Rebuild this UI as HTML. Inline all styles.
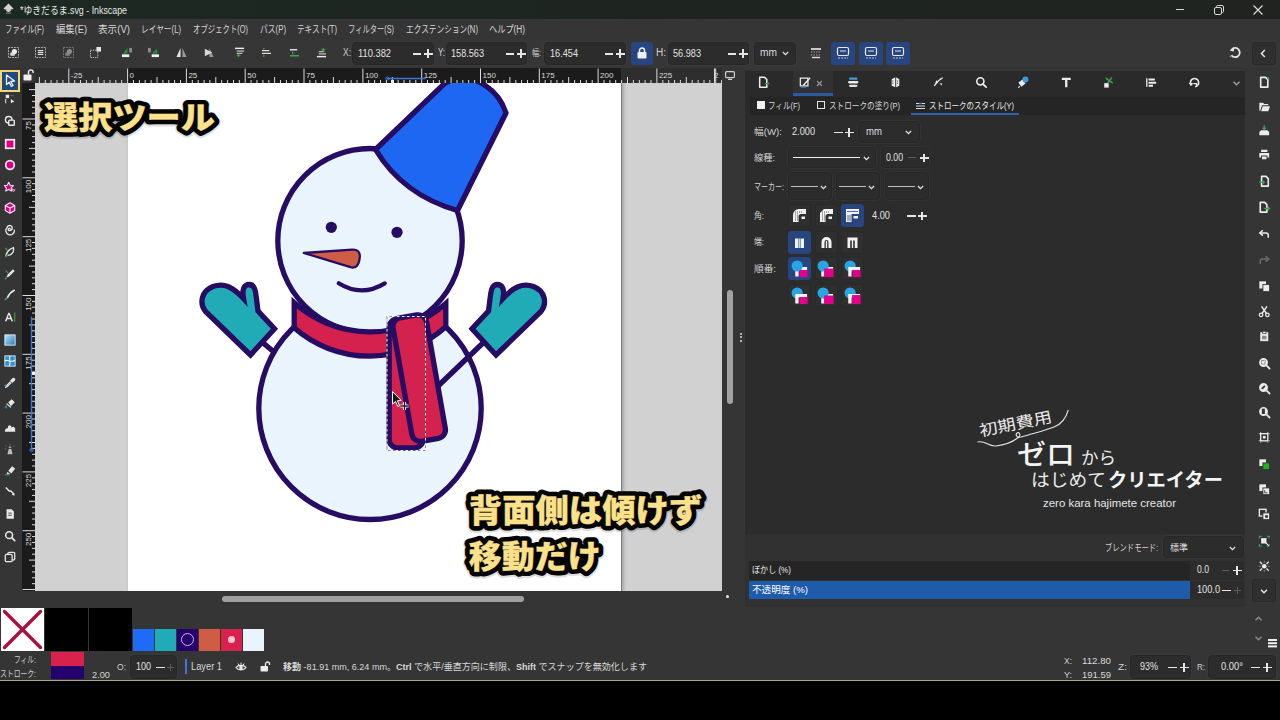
<!DOCTYPE html>
<html lang="ja"><head><meta charset="utf-8"><title>ゆきだるま.svg - Inkscape</title>
<style>

*{box-sizing:border-box;margin:0;padding:0}
html,body{width:1280px;height:720px;overflow:hidden;background:#353535}
body{position:relative;font-family:"Liberation Sans","Noto Sans CJK JP",sans-serif;font-size:10px;color:#dcdcdc}
.a{position:absolute}
.t{position:absolute;white-space:nowrap;transform-origin:0 50%;display:block}
.fld{position:absolute;background:#2c2c2c;border:1px solid #272727;border-radius:4px;box-shadow:0 0 0 1px rgba(70,70,70,.25)}
.btn{position:absolute;background:#2f2f2f;border:1px solid #292929;border-radius:3px}
.sel{background:#27467f;border-color:#27467f}
svg{position:absolute;overflow:visible}
.pm{position:absolute;background:#e6e6e6}
.pmd{position:absolute;background:#5a5a5a}

</style></head>
<body>
<div class="a" style="left:0;top:0;width:1280px;height:19px;background:linear-gradient(90deg,#1c2922 0%,#1e2521 50%,#20231f 100%)"></div>
<svg style="left:3px;top:3px" width="11" height="11" viewBox="0 0 11 11"><path d="M5.5 0.5 L10.5 5.6 Q9 7 7.6 6.2 Q8.6 7.8 7 8.6 Q5.5 9.4 4 8.6 Q2.4 7.8 3.4 6.2 Q2 7 0.5 5.6 Z" fill="#cfd4d1"/><path d="M3 9.6 h5 v0.9 h-5z" fill="#9aa09c"/></svg>
<span class="t" style="left:20.0px;top:2.7px;font-size:10.5px;line-height:14.7px;color:#e8e8e8;font-weight:400;transform:scaleX(0.841);">*ゆきだるま.svg - Inkscape</span>
<div class="a" style="left:1176px;top:9px;width:8px;height:1px;background:#d8d8d8"></div>
<svg style="left:1214px;top:5px" width="10" height="10" viewBox="0 0 10 10"><rect x="0.5" y="2.5" width="7" height="7" rx="1.5" fill="none" stroke="#d8d8d8" stroke-width="1"/><path d="M2.5 2 V1.7 Q2.5 0.5 3.7 0.5 H8 Q9.5 0.5 9.5 2 V6.3 Q9.5 7.5 8.3 7.5" fill="none" stroke="#d8d8d8" stroke-width="1"/></svg>
<svg style="left:1253px;top:5px" width="10" height="10" viewBox="0 0 10 10"><path d="M0.5 0.5 L9.5 9.5 M9.5 0.5 L0.5 9.5" stroke="#e0e0e0" stroke-width="1.1" fill="none"/></svg>
<div class="a" style="left:0;top:19px;width:1280px;height:20px;background:#353535"></div>
<span class="t" style="left:5.0px;top:22.5px;font-size:10px;line-height:14.0px;color:#d6d6d6;font-weight:400;transform:scaleX(0.739);">ファイル(F)</span>
<span class="t" style="left:56.0px;top:22.5px;font-size:10px;line-height:14.0px;color:#d6d6d6;font-weight:400;transform:scaleX(0.930);">編集(E)</span>
<span class="t" style="left:98.0px;top:22.5px;font-size:10px;line-height:14.0px;color:#d6d6d6;font-weight:400;transform:scaleX(0.960);">表示(V)</span>
<span class="t" style="left:141.0px;top:22.5px;font-size:10px;line-height:14.0px;color:#d6d6d6;font-weight:400;transform:scaleX(0.770);">レイヤー(L)</span>
<span class="t" style="left:193.0px;top:22.5px;font-size:10px;line-height:14.0px;color:#d6d6d6;font-weight:400;transform:scaleX(0.739);">オブジェクト(O)</span>
<span class="t" style="left:260.0px;top:22.5px;font-size:10px;line-height:14.0px;color:#d6d6d6;font-weight:400;transform:scaleX(0.780);">パス(P)</span>
<span class="t" style="left:297.0px;top:22.5px;font-size:10px;line-height:14.0px;color:#d6d6d6;font-weight:400;transform:scaleX(0.762);">テキスト(T)</span>
<span class="t" style="left:348.0px;top:22.5px;font-size:10px;line-height:14.0px;color:#d6d6d6;font-weight:400;transform:scaleX(0.729);">フィルター(S)</span>
<span class="t" style="left:406.0px;top:22.5px;font-size:10px;line-height:14.0px;color:#d6d6d6;font-weight:400;transform:scaleX(0.769);">エクステンション(N)</span>
<span class="t" style="left:489.0px;top:22.5px;font-size:10px;line-height:14.0px;color:#d6d6d6;font-weight:400;transform:scaleX(0.820);">ヘルプ(H)</span>
<div class="a" style="left:0;top:39px;width:1280px;height:29px;background:#363636"></div>
<svg style="left:8px;top:47px" width="11" height="11" viewBox="0 0 12 12"><rect x="0.5" y="0.5" width="11" height="11" fill="none" stroke="#bdbdbd" stroke-dasharray="2 1"/><circle cx="7" cy="5" r="2.8" fill="#f0f0f0"/><rect x="2.5" y="6" width="5" height="3.5" fill="#e0e0e0"/></svg>
<svg style="left:35px;top:47px" width="11" height="11" viewBox="0 0 12 12"><rect x="0.5" y="0.5" width="11" height="11" fill="none" stroke="#bdbdbd" stroke-dasharray="2 1"/><path d="M3 4h6M3 6h6M3 8h6" stroke="#e0e0e0" stroke-width="1.2"/></svg>
<svg style="left:63px;top:47px" width="11" height="11" viewBox="0 0 12 12"><rect x="0.5" y="0.5" width="11" height="11" fill="none" stroke="#7c7c7c" stroke-dasharray="2 1"/><circle cx="7" cy="5" r="2.8" fill="#8e8e8e"/><rect x="2.5" y="6" width="5" height="3.5" fill="#858585"/></svg>
<svg style="left:90px;top:47px" width="11" height="11" viewBox="0 0 12 12"><rect x="0.5" y="3.5" width="8" height="8" fill="none" stroke="#c8c8c8" stroke-dasharray="1.5 1"/><rect x="7" y="0" width="5" height="5" fill="#e8e8e8"/></svg>
<svg style="left:121px;top:47px" width="11" height="11" viewBox="0 0 12 12"><rect x="1" y="8" width="8" height="3" fill="#f0f0f0"/><path d="M2 7 L7 1 V7Z" fill="#2c8c3c"/><rect x="9" y="1" width="3" height="5" fill="#8c8c8c"/></svg>
<svg style="left:148px;top:47px" width="11" height="11" viewBox="0 0 12 12"><rect x="4" y="8" width="8" height="3" fill="#f0f0f0"/><path d="M4 7 H10 V2Z" fill="#2c8c3c"/><rect x="0" y="1" width="3" height="5" fill="#8c8c8c"/></svg>
<svg style="left:176px;top:47px" width="11" height="11" viewBox="0 0 12 12"><path d="M5 1 V11 H0.5Z" fill="#e8e8e8"/><path d="M7 1 V11 H11.5Z" fill="#9a9a9a"/></svg>
<svg style="left:203px;top:47px" width="11" height="11" viewBox="0 0 12 12"><path d="M1 5 H11 V0.5Z" fill="#9a9a9a" transform="rotate(90 6 6)"/><path d="M2 2 L10 6 L2 10Z" fill="#d8d8d8"/></svg>
<svg style="left:234px;top:47px" width="11" height="11" viewBox="0 0 12 12"><path d="M1 1.5H11" stroke="#eaeaea" stroke-width="1.6"/><path d="M3 4.5H11M3 7H9" stroke="#bdbdbd" stroke-width="1.2"/><path d="M5 11V8l-2 2M5 8l2 2" stroke="#3aa04a" stroke-width="1.2" fill="none"/></svg>
<svg style="left:261px;top:47px" width="11" height="11" viewBox="0 0 12 12"><path d="M1 4H9M1 7H11" stroke="#d8d8d8" stroke-width="1.4"/><path d="M3 1V3M3 11V8.5" stroke="#3aa04a" stroke-width="1.3"/></svg>
<svg style="left:289px;top:47px" width="11" height="11" viewBox="0 0 12 12"><path d="M1 3H9" stroke="#eaeaea" stroke-width="1.5"/><path d="M1 9.5H11" stroke="#3aa04a" stroke-width="1.8"/><path d="M4 5V8" stroke="#3aa04a" stroke-width="1.3"/></svg>
<svg style="left:316px;top:47px" width="11" height="11" viewBox="0 0 12 12"><path d="M1 10.5H11" stroke="#eaeaea" stroke-width="1.6"/><path d="M3 7.5H11M3 5H9" stroke="#bdbdbd" stroke-width="1.2"/><path d="M8 1V4l-2-2M8 4l2-2" stroke="#3aa04a" stroke-width="1.2" fill="none"/></svg>
<span class="t" style="left:343.0px;top:46.0px;font-size:10px;line-height:14.0px;color:#d0d0d0;font-weight:400;transform:scaleX(0.846);">X:</span>
<div class="fld" style="left:352px;top:42px;width:82px;height:23px"></div><span class="t" style="left:358.0px;top:46.5px;font-size:10px;line-height:14.0px;color:#e2e2e2;font-weight:400;transform:scaleX(0.932);">110.382</span><div class="pm" style="left:412.5px;top:53.0px;width:8px;height:1.5px"></div><div class="pm" style="left:423.5px;top:53.0px;width:9px;height:1.5px"></div><div class="pm" style="left:427.2px;top:49.2px;width:1.5px;height:9px"></div>
<span class="t" style="left:438.0px;top:46.0px;font-size:10px;line-height:14.0px;color:#d0d0d0;font-weight:400;transform:scaleX(0.786);">Y:</span>
<div class="fld" style="left:446px;top:42px;width:81px;height:23px"></div><span class="t" style="left:451.0px;top:46.5px;font-size:10px;line-height:14.0px;color:#e2e2e2;font-weight:400;transform:scaleX(0.913);">158.563</span><div class="pm" style="left:505.5px;top:53.0px;width:8px;height:1.5px"></div><div class="pm" style="left:516.5px;top:53.0px;width:9px;height:1.5px"></div><div class="pm" style="left:520.2px;top:49.2px;width:1.5px;height:9px"></div>
<span class="t" style="left:532.0px;top:46.7px;font-size:9px;line-height:12.6px;color:#d0d0d0;font-weight:400;transform:scaleX(0.782);">幅:</span>
<div class="fld" style="left:544px;top:42px;width:82px;height:23px"></div><span class="t" style="left:550.0px;top:46.5px;font-size:10px;line-height:14.0px;color:#e2e2e2;font-weight:400;transform:scaleX(0.915);">16.454</span><div class="pm" style="left:604.5px;top:53.0px;width:8px;height:1.5px"></div><div class="pm" style="left:615.5px;top:53.0px;width:9px;height:1.5px"></div><div class="pm" style="left:619.2px;top:49.2px;width:1.5px;height:9px"></div>
<div class="a" style="left:630.5px;top:42px;width:22.5px;height:23px;background:#27467f;border-radius:3px"></div>
<svg style="left:637px;top:47px" width="10" height="12" viewBox="0 0 10 12"><rect x="0.5" y="5" width="9" height="6.5" rx="1" fill="#f0f0f0"/><path d="M2.5 5V3.5a2.5 2.5 0 0 1 5 0V5" fill="none" stroke="#f0f0f0" stroke-width="1.5"/></svg>
<span class="t" style="left:656.0px;top:46.0px;font-size:10px;line-height:14.0px;color:#d0d0d0;font-weight:400;transform:scaleX(1.000);">H:</span>
<div class="fld" style="left:668px;top:42px;width:81px;height:23px"></div><span class="t" style="left:673.0px;top:46.5px;font-size:10px;line-height:14.0px;color:#e2e2e2;font-weight:400;transform:scaleX(0.915);">56.983</span><div class="pm" style="left:727.5px;top:53.0px;width:8px;height:1.5px"></div><div class="pm" style="left:738.5px;top:53.0px;width:9px;height:1.5px"></div><div class="pm" style="left:742.2px;top:49.2px;width:1.5px;height:9px"></div>
<div class="fld" style="left:754px;top:42px;width:42px;height:23px"></div>
<span class="t" style="left:760.0px;top:46.0px;font-size:10px;line-height:14.0px;color:#d8d8d8;font-weight:400;transform:scaleX(1.020);">mm</span>
<svg style="left:781.5px;top:51.0px" width="7" height="5" viewBox="0 0 8 5"><path d="M1 0.8 L4 3.8 L7 0.8" fill="none" stroke="#e0e0e0" stroke-width="1.5"/></svg>
<svg style="left:810px;top:47px" width="12" height="12" viewBox="0 0 12 12"><path d="M1 2H11" stroke="#eee" stroke-width="1.6"/><path d="M1 5H11M1 8H11" stroke="#9a9a9a" stroke-width="1" stroke-dasharray="1.5 1"/><path d="M2 10.5H10" stroke="#ddd" stroke-width="1.4"/></svg>
<div class="a" style="left:831px;top:42px;width:24px;height:23px;background:#27467f;border-radius:3px"></div>
<svg style="left:837px;top:47px" width="12" height="12" viewBox="0 0 12 12"><rect x="0.5" y="0.5" width="11" height="8" rx="1.5" fill="none" stroke="#e8e8e8" stroke-width="1.2"/><path d="M3 4H9" stroke="#e8e8e8"/><path d="M1 11H11" stroke="#b8c4dc" stroke-width="1.2" stroke-dasharray="2 1"/></svg>
<div class="a" style="left:859px;top:42px;width:24px;height:23px;background:#27467f;border-radius:3px"></div>
<svg style="left:865px;top:47px" width="12" height="12" viewBox="0 0 12 12"><rect x="0.5" y="0.5" width="11" height="8" rx="1.5" fill="none" stroke="#e8e8e8" stroke-width="1.2"/><path d="M3 4H9" stroke="#e8e8e8"/><path d="M1 11H11" stroke="#b8c4dc" stroke-width="1.2" stroke-dasharray="2 1"/></svg>
<div class="a" style="left:886px;top:42px;width:24px;height:23px;background:#27467f;border-radius:3px"></div>
<svg style="left:892px;top:47px" width="12" height="12" viewBox="0 0 12 12"><rect x="0.5" y="0.5" width="11" height="8" rx="1.5" fill="none" stroke="#e8e8e8" stroke-width="1.2"/><path d="M3 4H9" stroke="#e8e8e8"/><path d="M1 11H11" stroke="#b8c4dc" stroke-width="1.2" stroke-dasharray="2 1"/></svg>
<svg style="left:1229px;top:46px" width="13" height="13" viewBox="0 0 13 13"><path d="M3 3.2 A4.6 4.6 0 1 1 2.4 9.2" fill="none" stroke="#e6e6e6" stroke-width="1.8"/><path d="M0.5 4.5 L4.8 1 L5 5.6Z" fill="#e6e6e6"/><circle cx="1.5" cy="10.5" r="1" fill="#4aa84a"/></svg>
<div class="btn" style="left:1252px;top:42px;width:24px;height:23px"></div>
<svg style="left:1260px;top:49px" width="6" height="9" viewBox="0 0 6 9"><path d="M4.8 1 L1.5 4.5 L4.8 8" fill="none" stroke="#e6e6e6" stroke-width="1.5"/></svg>
<div class="a" style="left:0;top:68px;width:21px;height:540px;background:#353535"></div>
<div class="a" style="left:0;top:70px;width:20px;height:22px;background:#1f4a80;border:2.5px solid #f7d774"></div>
<svg style="left:5px;top:74px" width="11" height="13" viewBox="0 0 11 13"><path d="M1.5 1 L9.5 7 L5.8 7.4 L8 11.5 L6.2 12.3 L4.2 8.2 L1.5 10.6Z" fill="#27467f" stroke="#f2f2f2" stroke-width="1.3" stroke-linejoin="round"/></svg>
<svg style="left:4px;top:93px" width="12" height="12" viewBox="0 0 14 14"><path d="M2 2h4v4h-4z" fill="#e8e8e8"/><path d="M2 7v5" stroke="#e8e8e8" stroke-width="1.2"/><path d="M8 7l4 3-4 2z" fill="#e8e8e8"/><path d="M8 3h3" stroke="#9a9a9a" stroke-dasharray="1 1"/></svg>
<svg style="left:4px;top:115px" width="12" height="12" viewBox="0 0 14 14"><circle cx="5.5" cy="5.5" r="3.8" fill="none" stroke="#e8e8e8" stroke-width="1.7"/><rect x="5.5" y="6" width="6.5" height="6" rx="1" fill="#353535" stroke="#e8e8e8" stroke-width="1.7"/></svg>
<svg style="left:4px;top:138px" width="12" height="12" viewBox="0 0 14 14"><rect x="2" y="2" width="10" height="10" fill="#d4008c" stroke="#f6e4f0" stroke-width="2"/></svg>
<svg style="left:4px;top:159px" width="12" height="12" viewBox="0 0 14 14"><circle cx="7" cy="7" r="5" fill="#d4008c" stroke="#f6e4f0" stroke-width="2"/></svg>
<svg style="left:4px;top:181px" width="12" height="12" viewBox="0 0 14 14"><path d="M5.5 1.5 L7.2 5 L11 5.4 L8.2 8 L9 11.8 L5.5 9.9 L2 11.8 L2.8 8 L0.5 5.4 L3.8 5Z" fill="#d4008c" stroke="#f4e6f0" stroke-width="1.2" stroke-linejoin="round"/><path d="M9 9l4 1.5-2 2z" fill="#d4008c" stroke="#f4e6f0" stroke-width="0.8"/></svg>
<svg style="left:4px;top:202px" width="12" height="12" viewBox="0 0 14 14"><path d="M7 1 L12.5 4 V10 L7 13 L1.5 10 V4Z" fill="#d4008c" stroke="#f4e6f0" stroke-width="1.3" stroke-linejoin="round"/><path d="M1.5 4 L7 7 L12.5 4 M7 7V13" fill="none" stroke="#f4e6f0" stroke-width="1.3"/></svg>
<svg style="left:4px;top:223px" width="12" height="12" viewBox="0 0 14 14"><path d="M7.5 7.2 a1.3 1.3 0 1 0 -1.6 1.6 a3 3 0 1 0 -2.2 -3.6 a5 5 0 1 0 8.4 3.2" fill="none" stroke="#e8e8e8" stroke-width="1.6" stroke-linecap="round"/></svg>
<svg style="left:4px;top:246px" width="12" height="12" viewBox="0 0 14 14"><path d="M2 12 C3 7 5 4 11 2 C12 7 9 11 4 11" fill="none" stroke="#e8e8e8" stroke-width="1.5"/><path d="M2 2l2 4" stroke="#3aa04a" stroke-width="1.5"/><circle cx="3" cy="11.5" r="1.3" fill="#3aa04a"/></svg>
<svg style="left:4px;top:268px" width="12" height="12" viewBox="0 0 14 14"><path d="M10.5 1.5 l2 2 -6.5 6.5 -3 1 1-3z" fill="#e8e8e8"/><path d="M1 13l2-2" stroke="#3aa04a" stroke-width="1.6"/><path d="M2 3l3 3" stroke="#3aa04a" stroke-width="1.4"/></svg>
<svg style="left:4px;top:289px" width="12" height="12" viewBox="0 0 14 14"><path d="M12 1.5 C9 3 6 6 4 10" fill="none" stroke="#e8e8e8" stroke-width="1.8" stroke-linecap="round"/><path d="M1 13 l3-3" stroke="#3aa04a" stroke-width="1.8"/></svg>
<svg style="left:4px;top:311px" width="12" height="12" viewBox="0 0 14 14"><path d="M1 12 L5 2 H6.6 L10.6 12 H8.6 L7.8 9.6 H3.8 L3 12Z M4.4 8 H7.2 L5.8 4Z" fill="#e8e8e8"/><path d="M12.5 1.5V12.5" stroke="#3aa04a" stroke-width="1.3"/></svg>
<svg style="left:4px;top:334px" width="12" height="12" viewBox="0 0 14 14"><defs><linearGradient id="gg" x1="0" y1="0" x2="1" y2="1"><stop offset="0" stop-color="#bfe2f6"/><stop offset="1" stop-color="#1a7fc0"/></linearGradient></defs><rect x="1" y="1" width="12" height="12" fill="url(#gg)" stroke="#e8f2f8" stroke-width="1"/></svg>
<svg style="left:4px;top:355px" width="12" height="12" viewBox="0 0 14 14"><rect x="1" y="1" width="12" height="12" fill="#2a8fd0" stroke="#e8f2f8" stroke-width="1"/><path d="M1 7 C4 4 6 10 13 6 M7 1 C5 5 9 8 6 13" fill="none" stroke="#eaf4fb" stroke-width="1.3"/></svg>
<svg style="left:4px;top:377px" width="12" height="12" viewBox="0 0 14 14"><path d="M12.5 1.5 a2 2 0 0 1 0 3 L9.5 7 7 4.5 9.5 1.8 a2 2 0 0 1 3-.3z" fill="#e8e8e8"/><path d="M7.5 5.5 L2.5 10.5 2 12 3.5 11.5 8.5 6.5" fill="none" stroke="#e8e8e8" stroke-width="1.3"/><path d="M1 9 l1.5 2" stroke="#2a8fd0" stroke-width="2"/></svg>
<svg style="left:4px;top:398px" width="12" height="12" viewBox="0 0 14 14"><path d="M5 5 L9 1.5 L12.5 5 L8 9.5Z" fill="#e8e8e8"/><path d="M3 6.5 L8 11" stroke="#e8e8e8" stroke-width="1.4"/><path d="M2.5 8 C1 10 1 12 2.5 12.5 C4 12 4 10 2.5 8Z" fill="#2a8fd0"/></svg>
<svg style="left:4px;top:421px" width="12" height="12" viewBox="0 0 14 14"><path d="M1 12.5 H13 V9 C12 6 9.5 6.5 9 8 C8.5 4 4 4 4.5 8.5 C2 8 1 10 1 12.5Z" fill="#e8e8e8"/></svg>
<svg style="left:4px;top:443px" width="12" height="12" viewBox="0 0 14 14"><path d="M4 13 L5.5 7 H8.5 L10 13Z" fill="#bdbdbd"/><path d="M5.5 6 V4 H8.5 V6Z" fill="#9a9a9a"/><path d="M2 3l1 1M7 1v1.5M12 3l-1 1M1 7h1.5" stroke="#8a8a8a" stroke-width="1"/></svg>
<svg style="left:4px;top:464px" width="12" height="12" viewBox="0 0 14 14"><path d="M5 8 L9.5 2.5 L13 5.5 L8.5 11Z" fill="#e8e8e8"/><path d="M4 9 L7.5 12 H3z" fill="#d8d8d8"/><path d="M1 12.5H6" stroke="#3aa04a" stroke-width="1.4"/></svg>
<svg style="left:4px;top:485px" width="12" height="12" viewBox="0 0 14 14"><path d="M2 3 L6 7 H8 L12 11" fill="none" stroke="#e8e8e8" stroke-width="1.7"/><path d="M12.5 12.5 l-3.5-1 2.5-2.5z" fill="#e8e8e8"/></svg>
<svg style="left:4px;top:508px" width="12" height="12" viewBox="0 0 14 14"><path d="M3 1.5 H9 L11.5 4 V12.5 H3Z" fill="#e8e8e8"/><path d="M5 6H9M5 8.5H9" stroke="#353535" stroke-width="1"/></svg>
<svg style="left:4px;top:530px" width="12" height="12" viewBox="0 0 14 14"><circle cx="6" cy="6" r="4" fill="none" stroke="#e8e8e8" stroke-width="1.8"/><path d="M9 9 L12.5 12.5" stroke="#e8e8e8" stroke-width="2" stroke-linecap="round"/></svg>
<svg style="left:4px;top:551px" width="12" height="12" viewBox="0 0 14 14"><rect x="1.5" y="4" width="8" height="8.5" rx="1.5" fill="none" stroke="#e8e8e8" stroke-width="1.5"/><path d="M4.5 3.8 V3 a1.5 1.5 0 0 1 1.5-1.5 H11 a1.5 1.5 0 0 1 1.5 1.5 V9 a1.5 1.5 0 0 1-1.5 1.5 H9.8" fill="none" stroke="#e8e8e8" stroke-width="1.5"/></svg>
<div class="a" style="left:21px;top:68px;width:15px;height:15px;background:#353535"></div>
<svg style="left:23px;top:69px" width="11" height="12" viewBox="0 0 11 12"><rect x="0.5" y="5.5" width="8" height="6" rx="0.8" fill="#f0f0f0"/><path d="M5.5 5.5V3.2a2.3 2.3 0 0 1 4.6 0V4" fill="none" stroke="#f0f0f0" stroke-width="1.4"/></svg>
<div class="a" style="left:35px;top:68px;width:687px;height:15px;background:#2e2e2e"></div>
<div class="a" style="left:128px;top:68px;width:493px;height:15px;background:#1b1b1b"></div>
<svg style="left:0;top:0" width="1280" height="100" viewBox="0 0 1280 100"><path d="M39.4 77V83" stroke="#dcdcdc" stroke-width="1"/><path d="M45.3 80V83" stroke="#dcdcdc" stroke-width="1"/><path d="M51.1 80V83" stroke="#dcdcdc" stroke-width="1"/><path d="M57.0 80V83" stroke="#dcdcdc" stroke-width="1"/><path d="M62.9 80V83" stroke="#dcdcdc" stroke-width="1"/><path d="M68.8 68.5V83" stroke="#dcdcdc" stroke-width="1"/><path d="M74.7 80V83" stroke="#dcdcdc" stroke-width="1"/><path d="M80.5 80V83" stroke="#dcdcdc" stroke-width="1"/><path d="M86.4 80V83" stroke="#dcdcdc" stroke-width="1"/><path d="M92.3 80V83" stroke="#dcdcdc" stroke-width="1"/><path d="M98.2 77V83" stroke="#dcdcdc" stroke-width="1"/><path d="M104.1 80V83" stroke="#dcdcdc" stroke-width="1"/><path d="M110.0 80V83" stroke="#dcdcdc" stroke-width="1"/><path d="M115.8 80V83" stroke="#dcdcdc" stroke-width="1"/><path d="M121.7 80V83" stroke="#dcdcdc" stroke-width="1"/><path d="M127.6 68.5V83" stroke="#dcdcdc" stroke-width="1"/><path d="M133.5 80V83" stroke="#dcdcdc" stroke-width="1"/><path d="M139.4 80V83" stroke="#dcdcdc" stroke-width="1"/><path d="M145.2 80V83" stroke="#dcdcdc" stroke-width="1"/><path d="M151.1 80V83" stroke="#dcdcdc" stroke-width="1"/><path d="M157.0 77V83" stroke="#dcdcdc" stroke-width="1"/><path d="M162.9 80V83" stroke="#dcdcdc" stroke-width="1"/><path d="M168.8 80V83" stroke="#dcdcdc" stroke-width="1"/><path d="M174.6 80V83" stroke="#dcdcdc" stroke-width="1"/><path d="M180.5 80V83" stroke="#dcdcdc" stroke-width="1"/><path d="M186.4 68.5V83" stroke="#dcdcdc" stroke-width="1"/><path d="M192.3 80V83" stroke="#dcdcdc" stroke-width="1"/><path d="M198.2 80V83" stroke="#dcdcdc" stroke-width="1"/><path d="M204.1 80V83" stroke="#dcdcdc" stroke-width="1"/><path d="M209.9 80V83" stroke="#dcdcdc" stroke-width="1"/><path d="M215.8 77V83" stroke="#dcdcdc" stroke-width="1"/><path d="M221.7 80V83" stroke="#dcdcdc" stroke-width="1"/><path d="M227.6 80V83" stroke="#dcdcdc" stroke-width="1"/><path d="M233.5 80V83" stroke="#dcdcdc" stroke-width="1"/><path d="M239.3 80V83" stroke="#dcdcdc" stroke-width="1"/><path d="M245.2 68.5V83" stroke="#dcdcdc" stroke-width="1"/><path d="M251.1 80V83" stroke="#dcdcdc" stroke-width="1"/><path d="M257.0 80V83" stroke="#dcdcdc" stroke-width="1"/><path d="M262.9 80V83" stroke="#dcdcdc" stroke-width="1"/><path d="M268.8 80V83" stroke="#dcdcdc" stroke-width="1"/><path d="M274.6 77V83" stroke="#dcdcdc" stroke-width="1"/><path d="M280.5 80V83" stroke="#dcdcdc" stroke-width="1"/><path d="M286.4 80V83" stroke="#dcdcdc" stroke-width="1"/><path d="M292.3 80V83" stroke="#dcdcdc" stroke-width="1"/><path d="M298.2 80V83" stroke="#dcdcdc" stroke-width="1"/><path d="M304.0 68.5V83" stroke="#dcdcdc" stroke-width="1"/><path d="M309.9 80V83" stroke="#dcdcdc" stroke-width="1"/><path d="M315.8 80V83" stroke="#dcdcdc" stroke-width="1"/><path d="M321.7 80V83" stroke="#dcdcdc" stroke-width="1"/><path d="M327.6 80V83" stroke="#dcdcdc" stroke-width="1"/><path d="M333.4 77V83" stroke="#dcdcdc" stroke-width="1"/><path d="M339.3 80V83" stroke="#dcdcdc" stroke-width="1"/><path d="M345.2 80V83" stroke="#dcdcdc" stroke-width="1"/><path d="M351.1 80V83" stroke="#dcdcdc" stroke-width="1"/><path d="M357.0 80V83" stroke="#dcdcdc" stroke-width="1"/><path d="M362.9 68.5V83" stroke="#dcdcdc" stroke-width="1"/><path d="M368.7 80V83" stroke="#dcdcdc" stroke-width="1"/><path d="M374.6 80V83" stroke="#dcdcdc" stroke-width="1"/><path d="M380.5 80V83" stroke="#dcdcdc" stroke-width="1"/><path d="M386.4 80V83" stroke="#dcdcdc" stroke-width="1"/><path d="M392.3 77V83" stroke="#dcdcdc" stroke-width="1"/><path d="M398.1 80V83" stroke="#dcdcdc" stroke-width="1"/><path d="M404.0 80V83" stroke="#dcdcdc" stroke-width="1"/><path d="M409.9 80V83" stroke="#dcdcdc" stroke-width="1"/><path d="M415.8 80V83" stroke="#dcdcdc" stroke-width="1"/><path d="M421.7 68.5V83" stroke="#dcdcdc" stroke-width="1"/><path d="M427.5 80V83" stroke="#dcdcdc" stroke-width="1"/><path d="M433.4 80V83" stroke="#dcdcdc" stroke-width="1"/><path d="M439.3 80V83" stroke="#dcdcdc" stroke-width="1"/><path d="M445.2 80V83" stroke="#dcdcdc" stroke-width="1"/><path d="M451.1 77V83" stroke="#dcdcdc" stroke-width="1"/><path d="M457.0 80V83" stroke="#dcdcdc" stroke-width="1"/><path d="M462.8 80V83" stroke="#dcdcdc" stroke-width="1"/><path d="M468.7 80V83" stroke="#dcdcdc" stroke-width="1"/><path d="M474.6 80V83" stroke="#dcdcdc" stroke-width="1"/><path d="M480.5 68.5V83" stroke="#dcdcdc" stroke-width="1"/><path d="M486.4 80V83" stroke="#dcdcdc" stroke-width="1"/><path d="M492.2 80V83" stroke="#dcdcdc" stroke-width="1"/><path d="M498.1 80V83" stroke="#dcdcdc" stroke-width="1"/><path d="M504.0 80V83" stroke="#dcdcdc" stroke-width="1"/><path d="M509.9 77V83" stroke="#dcdcdc" stroke-width="1"/><path d="M515.8 80V83" stroke="#dcdcdc" stroke-width="1"/><path d="M521.6 80V83" stroke="#dcdcdc" stroke-width="1"/><path d="M527.5 80V83" stroke="#dcdcdc" stroke-width="1"/><path d="M533.4 80V83" stroke="#dcdcdc" stroke-width="1"/><path d="M539.3 68.5V83" stroke="#dcdcdc" stroke-width="1"/><path d="M545.2 80V83" stroke="#dcdcdc" stroke-width="1"/><path d="M551.0 80V83" stroke="#dcdcdc" stroke-width="1"/><path d="M556.9 80V83" stroke="#dcdcdc" stroke-width="1"/><path d="M562.8 80V83" stroke="#dcdcdc" stroke-width="1"/><path d="M568.7 77V83" stroke="#dcdcdc" stroke-width="1"/><path d="M574.6 80V83" stroke="#dcdcdc" stroke-width="1"/><path d="M580.5 80V83" stroke="#dcdcdc" stroke-width="1"/><path d="M586.3 80V83" stroke="#dcdcdc" stroke-width="1"/><path d="M592.2 80V83" stroke="#dcdcdc" stroke-width="1"/><path d="M598.1 68.5V83" stroke="#dcdcdc" stroke-width="1"/><path d="M604.0 80V83" stroke="#dcdcdc" stroke-width="1"/><path d="M609.9 80V83" stroke="#dcdcdc" stroke-width="1"/><path d="M615.7 80V83" stroke="#dcdcdc" stroke-width="1"/><path d="M621.6 80V83" stroke="#dcdcdc" stroke-width="1"/><path d="M627.5 77V83" stroke="#dcdcdc" stroke-width="1"/><path d="M633.4 80V83" stroke="#dcdcdc" stroke-width="1"/><path d="M639.3 80V83" stroke="#dcdcdc" stroke-width="1"/><path d="M645.1 80V83" stroke="#dcdcdc" stroke-width="1"/><path d="M651.0 80V83" stroke="#dcdcdc" stroke-width="1"/><path d="M656.9 68.5V83" stroke="#dcdcdc" stroke-width="1"/><path d="M662.8 80V83" stroke="#dcdcdc" stroke-width="1"/><path d="M668.7 80V83" stroke="#dcdcdc" stroke-width="1"/><path d="M674.6 80V83" stroke="#dcdcdc" stroke-width="1"/><path d="M680.4 80V83" stroke="#dcdcdc" stroke-width="1"/><path d="M686.3 77V83" stroke="#dcdcdc" stroke-width="1"/><path d="M692.2 80V83" stroke="#dcdcdc" stroke-width="1"/><path d="M698.1 80V83" stroke="#dcdcdc" stroke-width="1"/><path d="M704.0 80V83" stroke="#dcdcdc" stroke-width="1"/><path d="M709.8 80V83" stroke="#dcdcdc" stroke-width="1"/><path d="M715.7 68.5V83" stroke="#dcdcdc" stroke-width="1"/><path d="M721.6 80V83" stroke="#dcdcdc" stroke-width="1"/><text x="70.8" y="78" font-size="8" fill="#dcdcdc" font-family="Liberation Sans, sans-serif">-25</text><text x="129.6" y="78" font-size="8" fill="#dcdcdc" font-family="Liberation Sans, sans-serif">0</text><text x="188.4" y="78" font-size="8" fill="#dcdcdc" font-family="Liberation Sans, sans-serif">25</text><text x="247.2" y="78" font-size="8" fill="#dcdcdc" font-family="Liberation Sans, sans-serif">50</text><text x="306.0" y="78" font-size="8" fill="#dcdcdc" font-family="Liberation Sans, sans-serif">75</text><text x="364.9" y="78" font-size="8" fill="#dcdcdc" font-family="Liberation Sans, sans-serif">100</text><text x="423.7" y="78" font-size="8" fill="#dcdcdc" font-family="Liberation Sans, sans-serif">125</text><text x="482.5" y="78" font-size="8" fill="#dcdcdc" font-family="Liberation Sans, sans-serif">150</text><text x="541.3" y="78" font-size="8" fill="#dcdcdc" font-family="Liberation Sans, sans-serif">175</text><text x="600.1" y="78" font-size="8" fill="#dcdcdc" font-family="Liberation Sans, sans-serif">200</text><text x="658.9" y="78" font-size="8" fill="#dcdcdc" font-family="Liberation Sans, sans-serif">225</text><text x="714" y="78" font-size="8" fill="#dcdcdc" font-family="Liberation Sans, sans-serif">2</text><path d="M714.5 68.5V83" stroke="#dcdcdc" stroke-width="1"/><path d="M387 78.5H425.5" stroke="#3b78d8" stroke-width="1.3"/><circle cx="387.5" cy="78.5" r="1.6" fill="none" stroke="#3b78d8"/><rect x="391" y="80" width="3" height="3" fill="#f0f0f0"/></svg>
<div class="a" style="left:22px;top:83px;width:13px;height:508px;background:#1b1b1b"></div>
<svg style="left:0;top:0" width="100" height="720" viewBox="0 0 100 720"><path d="M29 89.6H35" stroke="#dcdcdc" stroke-width="1"/><path d="M32 95.5H35" stroke="#dcdcdc" stroke-width="1"/><path d="M32 101.4H35" stroke="#dcdcdc" stroke-width="1"/><path d="M32 107.3H35" stroke="#dcdcdc" stroke-width="1"/><path d="M32 113.2H35" stroke="#dcdcdc" stroke-width="1"/><path d="M22.5 119.0H35" stroke="#dcdcdc" stroke-width="1"/><path d="M32 124.9H35" stroke="#dcdcdc" stroke-width="1"/><path d="M32 130.8H35" stroke="#dcdcdc" stroke-width="1"/><path d="M32 136.7H35" stroke="#dcdcdc" stroke-width="1"/><path d="M32 142.6H35" stroke="#dcdcdc" stroke-width="1"/><path d="M29 148.4H35" stroke="#dcdcdc" stroke-width="1"/><path d="M32 154.3H35" stroke="#dcdcdc" stroke-width="1"/><path d="M32 160.2H35" stroke="#dcdcdc" stroke-width="1"/><path d="M32 166.1H35" stroke="#dcdcdc" stroke-width="1"/><path d="M32 172.0H35" stroke="#dcdcdc" stroke-width="1"/><path d="M22.5 177.8H35" stroke="#dcdcdc" stroke-width="1"/><path d="M32 183.7H35" stroke="#dcdcdc" stroke-width="1"/><path d="M32 189.6H35" stroke="#dcdcdc" stroke-width="1"/><path d="M32 195.5H35" stroke="#dcdcdc" stroke-width="1"/><path d="M32 201.4H35" stroke="#dcdcdc" stroke-width="1"/><path d="M29 207.3H35" stroke="#dcdcdc" stroke-width="1"/><path d="M32 213.1H35" stroke="#dcdcdc" stroke-width="1"/><path d="M32 219.0H35" stroke="#dcdcdc" stroke-width="1"/><path d="M32 224.9H35" stroke="#dcdcdc" stroke-width="1"/><path d="M32 230.8H35" stroke="#dcdcdc" stroke-width="1"/><path d="M22.5 236.7H35" stroke="#dcdcdc" stroke-width="1"/><path d="M32 242.5H35" stroke="#dcdcdc" stroke-width="1"/><path d="M32 248.4H35" stroke="#dcdcdc" stroke-width="1"/><path d="M32 254.3H35" stroke="#dcdcdc" stroke-width="1"/><path d="M32 260.2H35" stroke="#dcdcdc" stroke-width="1"/><path d="M29 266.1H35" stroke="#dcdcdc" stroke-width="1"/><path d="M32 272.0H35" stroke="#dcdcdc" stroke-width="1"/><path d="M32 277.8H35" stroke="#dcdcdc" stroke-width="1"/><path d="M32 283.7H35" stroke="#dcdcdc" stroke-width="1"/><path d="M32 289.6H35" stroke="#dcdcdc" stroke-width="1"/><path d="M22.5 295.5H35" stroke="#dcdcdc" stroke-width="1"/><path d="M32 301.4H35" stroke="#dcdcdc" stroke-width="1"/><path d="M32 307.2H35" stroke="#dcdcdc" stroke-width="1"/><path d="M32 313.1H35" stroke="#dcdcdc" stroke-width="1"/><path d="M32 319.0H35" stroke="#dcdcdc" stroke-width="1"/><path d="M29 324.9H35" stroke="#dcdcdc" stroke-width="1"/><path d="M32 330.8H35" stroke="#dcdcdc" stroke-width="1"/><path d="M32 336.6H35" stroke="#dcdcdc" stroke-width="1"/><path d="M32 342.5H35" stroke="#dcdcdc" stroke-width="1"/><path d="M32 348.4H35" stroke="#dcdcdc" stroke-width="1"/><path d="M22.5 354.3H35" stroke="#dcdcdc" stroke-width="1"/><path d="M32 360.2H35" stroke="#dcdcdc" stroke-width="1"/><path d="M32 366.1H35" stroke="#dcdcdc" stroke-width="1"/><path d="M32 371.9H35" stroke="#dcdcdc" stroke-width="1"/><path d="M32 377.8H35" stroke="#dcdcdc" stroke-width="1"/><path d="M29 383.7H35" stroke="#dcdcdc" stroke-width="1"/><path d="M32 389.6H35" stroke="#dcdcdc" stroke-width="1"/><path d="M32 395.5H35" stroke="#dcdcdc" stroke-width="1"/><path d="M32 401.3H35" stroke="#dcdcdc" stroke-width="1"/><path d="M32 407.2H35" stroke="#dcdcdc" stroke-width="1"/><path d="M22.5 413.1H35" stroke="#dcdcdc" stroke-width="1"/><path d="M32 419.0H35" stroke="#dcdcdc" stroke-width="1"/><path d="M32 424.9H35" stroke="#dcdcdc" stroke-width="1"/><path d="M32 430.7H35" stroke="#dcdcdc" stroke-width="1"/><path d="M32 436.6H35" stroke="#dcdcdc" stroke-width="1"/><path d="M29 442.5H35" stroke="#dcdcdc" stroke-width="1"/><path d="M32 448.4H35" stroke="#dcdcdc" stroke-width="1"/><path d="M32 454.3H35" stroke="#dcdcdc" stroke-width="1"/><path d="M32 460.1H35" stroke="#dcdcdc" stroke-width="1"/><path d="M32 466.0H35" stroke="#dcdcdc" stroke-width="1"/><path d="M22.5 471.9H35" stroke="#dcdcdc" stroke-width="1"/><path d="M32 477.8H35" stroke="#dcdcdc" stroke-width="1"/><path d="M32 483.7H35" stroke="#dcdcdc" stroke-width="1"/><path d="M32 489.6H35" stroke="#dcdcdc" stroke-width="1"/><path d="M32 495.4H35" stroke="#dcdcdc" stroke-width="1"/><path d="M29 501.3H35" stroke="#dcdcdc" stroke-width="1"/><path d="M32 507.2H35" stroke="#dcdcdc" stroke-width="1"/><path d="M32 513.1H35" stroke="#dcdcdc" stroke-width="1"/><path d="M32 519.0H35" stroke="#dcdcdc" stroke-width="1"/><path d="M32 524.8H35" stroke="#dcdcdc" stroke-width="1"/><path d="M22.5 530.7H35" stroke="#dcdcdc" stroke-width="1"/><path d="M32 536.6H35" stroke="#dcdcdc" stroke-width="1"/><path d="M32 542.5H35" stroke="#dcdcdc" stroke-width="1"/><path d="M32 548.4H35" stroke="#dcdcdc" stroke-width="1"/><path d="M32 554.2H35" stroke="#dcdcdc" stroke-width="1"/><path d="M29 560.1H35" stroke="#dcdcdc" stroke-width="1"/><path d="M32 566.0H35" stroke="#dcdcdc" stroke-width="1"/><path d="M32 571.9H35" stroke="#dcdcdc" stroke-width="1"/><path d="M32 577.8H35" stroke="#dcdcdc" stroke-width="1"/><path d="M32 583.7H35" stroke="#dcdcdc" stroke-width="1"/><path d="M22.5 589.5H35" stroke="#dcdcdc" stroke-width="1"/><text transform="translate(30.5 121.0) rotate(-90)" text-anchor="end" font-size="8" fill="#dcdcdc" font-family="Liberation Sans, sans-serif">75</text><text transform="translate(30.5 179.8) rotate(-90)" text-anchor="end" font-size="8" fill="#dcdcdc" font-family="Liberation Sans, sans-serif">100</text><text transform="translate(30.5 238.7) rotate(-90)" text-anchor="end" font-size="8" fill="#dcdcdc" font-family="Liberation Sans, sans-serif">125</text><text transform="translate(30.5 297.5) rotate(-90)" text-anchor="end" font-size="8" fill="#dcdcdc" font-family="Liberation Sans, sans-serif">150</text><text transform="translate(30.5 356.3) rotate(-90)" text-anchor="end" font-size="8" fill="#dcdcdc" font-family="Liberation Sans, sans-serif">175</text><text transform="translate(30.5 415.1) rotate(-90)" text-anchor="end" font-size="8" fill="#dcdcdc" font-family="Liberation Sans, sans-serif">200</text><text transform="translate(30.5 473.9) rotate(-90)" text-anchor="end" font-size="8" fill="#dcdcdc" font-family="Liberation Sans, sans-serif">225</text><text transform="translate(30.5 532.7) rotate(-90)" text-anchor="end" font-size="8" fill="#dcdcdc" font-family="Liberation Sans, sans-serif">250</text><path d="M31.5 316.5V450.5" stroke="#3b78d8" stroke-width="1.3"/><circle cx="31.5" cy="450" r="1.6" fill="none" stroke="#3b78d8"/><rect x="32" y="372" width="3" height="3" fill="#f0f0f0"/></svg>
<div class="a" style="left:722px;top:68px;width:23px;height:15px;background:#353535"></div>
<svg style="left:725px;top:71px" width="10" height="9" viewBox="0 0 10 9"><rect x="0.6" y="0.6" width="8.8" height="6" rx="1" fill="none" stroke="#d0d0d0" stroke-width="1.2"/><path d="M3 8.4H7" stroke="#d0d0d0" stroke-width="1.2"/></svg>
<div class="a" style="left:35px;top:83px;width:687px;height:508.5px;background:#d1d1d1;overflow:hidden"><div class="a" style="left:93px;top:0;width:493px;height:509px;background:#fff;box-shadow:1px 0 0 #808080, 2px 0 4px rgba(0,0,0,.3)"></div></div>
<svg style="left:35px;top:83px;overflow:hidden" width="687" height="508" viewBox="35 83 687 508"><g stroke="#260c62" stroke-width="5.3" stroke-linejoin="miter" stroke-miterlimit="6" stroke-linecap="butt"><circle cx="370" cy="408.3" r="111.2" fill="#eaf4fd"/><path d="M262 342 L274 352"/><path d="M484 342 L436.5 387.5"/><circle cx="370" cy="240.7" r="92.2" fill="#eaf4fd"/><path d="M375.5 149.5 L444 84 Q452 78 470 78 Q498 88 506 113 L457.5 210.5 Q403 195 375.5 149.5Z" fill="#1e67f2" stroke-linejoin="round"/><path d="M294.2 302.8 A114 114 0 0 0 445.8 303.4 L445.8 326.8 A114 114 0 0 1 294.2 327.8Z" fill="#d4214d"/><rect x="389.2" y="318.9" width="33.8" height="129" rx="8.5" fill="#d4214d"/><rect x="402.2" y="315.45" width="34" height="125.3" rx="8.5" fill="#d4214d" transform="rotate(-10 419.2 378.1)"/><path d="M250.5 355 L205.5 311.5 C199 303 201.5 291 213 286.5 C224 282.5 233 287 243.5 298.5 C242 290 243.5 284.5 249.5 284.5 C255 285 255.5 291 256.5 299 L258 311 L274.5 328.8Z" fill="#21abb6"/><path d="M250.5 355 L205.5 311.5 C199 303 201.5 291 213 286.5 C224 282.5 233 287 243.5 298.5 C242 290 243.5 284.5 249.5 284.5 C255 285 255.5 291 256.5 299 L258 311 L274.5 328.8Z" fill="#21abb6" transform="translate(746.5 0) scale(-1 1)"/></g><circle cx="331.3" cy="227.3" r="5.6" fill="#260c62"/><circle cx="397" cy="232.3" r="5.6" fill="#260c62"/><path d="M303.8 253 L352 249.6 Q360.3 249.2 359.8 257 Q359.3 263 356.8 266 Q354.5 268.2 350.5 267.2Z" fill="#cf5d45" stroke="#260c62" stroke-width="2.3" stroke-linejoin="round"/><path d="M338.7 283.3 Q361.5 297.5 384.8 283.4" fill="none" stroke="#260c62" stroke-width="4.2" stroke-linecap="round"/><rect x="387" y="316.5" width="38.5" height="134" fill="none" stroke="#444" stroke-opacity=".75" stroke-width="0.8"/><rect x="387" y="316.5" width="38.5" height="134" fill="none" stroke="#fff" stroke-width="0.9" stroke-dasharray="2.5 2.5"/><path d="M392.5 391.5 L392.5 404 L395.5 401.5 L397.8 406.5 L399.6 405.7 L397.4 400.8 L401.2 400.4Z" fill="#1a1a1a" stroke="#fff" stroke-width="1"/><g stroke="#fff" stroke-width="3.2"><path d="M400.5 406H408.5M404.5 402V410"/></g><g stroke="#222" stroke-width="1.4"><path d="M400.5 406H408.5M404.5 402V410"/></g></svg>
<svg style="left:0;top:0" width="1280" height="720" viewBox="0 0 1280 720"><g font-family='"Liberation Sans","Noto Sans CJK JP",sans-serif' font-weight="900" font-size="31.5"><text x="44" y="130.4" textLength="171" lengthAdjust="spacingAndGlyphs" fill="#000" stroke="#000" stroke-opacity=".12" stroke-width="12" stroke-linejoin="round">選択ツール</text><text x="44" y="129.4" textLength="171" lengthAdjust="spacingAndGlyphs" fill="#050505" stroke="#050505" stroke-width="9.5" stroke-linejoin="round">選択ツール</text><text x="44" y="129.4" textLength="171" lengthAdjust="spacingAndGlyphs" fill="#fbe18b" stroke="#fbe18b" stroke-width="0.3" stroke-linejoin="round">選択ツール</text></g></svg>
<svg style="left:0;top:0" width="1280" height="720" viewBox="0 0 1280 720"><g font-family='"Liberation Sans","Noto Sans CJK JP",sans-serif' font-weight="900" font-size="31.5"><text x="468.8" y="522.5" textLength="233.5" lengthAdjust="spacingAndGlyphs" fill="#000" stroke="#000" stroke-opacity=".12" stroke-width="12" stroke-linejoin="round">背面側は傾けず</text><text x="468.8" y="521.5" textLength="233.5" lengthAdjust="spacingAndGlyphs" fill="#050505" stroke="#050505" stroke-width="9.5" stroke-linejoin="round">背面側は傾けず</text><text x="468.8" y="521.5" textLength="233.5" lengthAdjust="spacingAndGlyphs" fill="#fbe18b" stroke="#fbe18b" stroke-width="0.3" stroke-linejoin="round">背面側は傾けず</text></g></svg>
<svg style="left:0;top:0" width="1280" height="720" viewBox="0 0 1280 720"><g font-family='"Liberation Sans","Noto Sans CJK JP",sans-serif' font-weight="900" font-size="31.5"><text x="468.8" y="568.9" textLength="132" lengthAdjust="spacingAndGlyphs" fill="#000" stroke="#000" stroke-opacity=".12" stroke-width="12" stroke-linejoin="round">移動だけ</text><text x="468.8" y="567.9" textLength="132" lengthAdjust="spacingAndGlyphs" fill="#050505" stroke="#050505" stroke-width="9.5" stroke-linejoin="round">移動だけ</text><text x="468.8" y="567.9" textLength="132" lengthAdjust="spacingAndGlyphs" fill="#fbe18b" stroke="#fbe18b" stroke-width="0.3" stroke-linejoin="round">移動だけ</text></g></svg>
<div class="a" style="left:21px;top:591px;width:724px;height:17px;background:#353535"></div>
<div class="a" style="left:222px;top:596px;width:302px;height:6px;background:#9f9f9f;border-radius:3px"></div>
<div class="a" style="left:722px;top:83px;width:23px;height:508px;background:#353535"></div>
<div class="a" style="left:727px;top:290px;width:5.5px;height:113.5px;background:#a2a2a2;border-radius:3px"></div>
<div class="a" style="left:726px;top:595px;width:3px;height:3px;background:#e8e8e8;border-radius:2px"></div>
<div class="a" style="left:739.7px;top:332.5px;width:2px;height:2px;border-radius:1px;background:#dcdcdc"></div>
<div class="a" style="left:739.7px;top:336.2px;width:2px;height:2px;border-radius:1px;background:#dcdcdc"></div>
<div class="a" style="left:739.7px;top:340.0px;width:2px;height:2px;border-radius:1px;background:#dcdcdc"></div>
<div class="a" style="left:745px;top:71px;width:500px;height:536px;background:#2b2b2b"></div>
<div class="a" style="left:745px;top:71px;width:500px;height:26px;background:#2a2a2a"></div>
<div class="a" style="left:793px;top:71px;width:40px;height:22px;background:#313131"></div>
<div class="a" style="left:793px;top:92.5px;width:40px;height:3px;background:#2c5a9e"></div>
<svg style="left:756.8px;top:76.2px" width="12.5" height="12.5" viewBox="0 0 14 14"><path d="M3 1.5H8.5L11 4V12.5H3Z" fill="none" stroke="#ececec" stroke-width="1.7" stroke-linejoin="round"/><path d="M9 8.5H13M11.5 7l1.7 1.5-1.7 1.5" stroke="#3aa04a" stroke-width="1.2" fill="none"/></svg>
<svg style="left:798.8px;top:76.2px" width="12.5" height="12.5" viewBox="0 0 14 14"><path d="M1.5 2.5H10V11H1.5Z" fill="none" stroke="#ececec" stroke-width="1.4"/><path d="M4 10 L12 1.5 L13 2.5 L5.5 11Z" fill="#ececec"/><path d="M2 12.5H8" stroke="#3b78d8" stroke-width="1.4"/></svg>
<svg style="left:846.8px;top:76.2px" width="12.5" height="12.5" viewBox="0 0 14 14"><path d="M3.5 3H10.5" stroke="#4a9ad8" stroke-width="2.6" stroke-linecap="round"/><path d="M2.5 7H11.5" stroke="#ececec" stroke-width="2.6" stroke-linecap="round"/><path d="M3.5 11H10.5" stroke="#d8e6f0" stroke-width="2.4" stroke-linecap="round"/></svg>
<svg style="left:888.8px;top:76.2px" width="12.5" height="12.5" viewBox="0 0 14 14"><path d="M3 3.5 L7 1.5 V12.5 L3 11Z M8 1.5 L11.5 3.5 V11 L8 12.5Z" fill="#ececec"/><path d="M4.2 5v1.2M4.2 7.5v1.2M9.5 5v1.2M9.5 7.5v1.2" stroke="#2b2b2b" stroke-width="1"/></svg>
<svg style="left:931.8px;top:76.2px" width="12.5" height="12.5" viewBox="0 0 14 14"><path d="M12 2 C8 4 6 6 2.5 11" fill="none" stroke="#ececec" stroke-width="1.4"/><path d="M5 4.5l1.5 2.5L3.5 8Z" fill="#ececec"/><path d="M8.5 8l3 .5-1 2z" fill="#ececec"/></svg>
<svg style="left:974.8px;top:76.2px" width="12.5" height="12.5" viewBox="0 0 14 14"><circle cx="6" cy="6" r="4" fill="none" stroke="#ececec" stroke-width="1.8"/><path d="M9 9L12.5 12.5" stroke="#ececec" stroke-width="2" stroke-linecap="round"/></svg>
<svg style="left:1016.8px;top:76.2px" width="12.5" height="12.5" viewBox="0 0 14 14"><path d="M1.5 7.5 L6 4 L9.5 8.5 L5 12Z" fill="#ececec"/><circle cx="9.5" cy="4" r="3.4" fill="#3b9ad8"/><path d="M3 11.5l-1.5 1.5" stroke="#ececec" stroke-width="1.5"/></svg>
<svg style="left:1059.8px;top:76.2px" width="12.5" height="12.5" viewBox="0 0 14 14"><path d="M2 2H12V4.5H8.3V12.5H5.7V4.5H2Z" fill="#ececec"/></svg>
<svg style="left:1101.8px;top:76.2px" width="12.5" height="12.5" viewBox="0 0 14 14"><rect x="2.5" y="8" width="5" height="5" fill="#ececec"/><path d="M4 2l8 6M11 1.5L6.5 8" stroke="#3aa04a" stroke-width="1.8"/></svg>
<svg style="left:1144.8px;top:76.2px" width="12.5" height="12.5" viewBox="0 0 14 14"><path d="M2 2.5V12" stroke="#ececec" stroke-width="1.5"/><path d="M4 4H11M4 7.5H12.5M4 11H9" stroke="#ececec" stroke-width="2.2"/></svg>
<svg style="left:1187.8px;top:76.2px" width="12.5" height="12.5" viewBox="0 0 14 14"><path d="M3.2 9.5 A4.6 4.6 0 1 1 8 12" fill="none" stroke="#ececec" stroke-width="1.8"/><path d="M0.8 7.5 L3.3 11.5 L6 8Z" fill="#ececec"/><path d="M6 8.5H9.5V12" fill="none" stroke="#ececec" stroke-width="1.2"/></svg>
<svg style="left:816px;top:80px" width="7" height="7" viewBox="0 0 7 7"><path d="M1 1L6 6M6 1L1 6" stroke="#9a9a9a" stroke-width="1.1"/></svg>
<svg style="left:1231.5px;top:81.0px" width="9" height="5" viewBox="0 0 8 5"><path d="M1 0.8 L4 3.8 L7 0.8" fill="none" stroke="#9a9a9a" stroke-width="1.5"/></svg>
<div class="a" style="left:750px;top:97px;width:495px;height:18px;background:#252525"></div>
<div class="a" style="left:750px;top:115px;width:495px;height:418px;background:#2c2c2c"></div>
<div class="a" style="left:757px;top:101px;width:8px;height:8px;background:#f2f2f2"></div>
<span class="t" style="left:768.0px;top:99.3px;font-size:9.5px;line-height:13.3px;color:#d8d8d8;font-weight:400;transform:scaleX(0.791);">フィル(F)</span>
<div class="a" style="left:817px;top:101px;width:8px;height:8px;border:1.5px solid #e6e6e6"></div>
<span class="t" style="left:829.0px;top:99.3px;font-size:9.5px;line-height:13.3px;color:#d8d8d8;font-weight:400;transform:scaleX(0.801);">ストロークの塗り(P)</span>
<svg style="left:916px;top:102px" width="9" height="8" viewBox="0 0 9 8"><path d="M0 1.5H9M0 4H9M0 6.5H9" stroke="#dcdcdc" stroke-width="1.2"/><path d="M3 1.5H6" stroke="#3b8ad8" stroke-width="1.4"/></svg>
<span class="t" style="left:929.0px;top:99.3px;font-size:9.5px;line-height:13.3px;color:#ececec;font-weight:400;transform:scaleX(0.789);">ストロークのスタイル(Y)</span>
<div class="a" style="left:911px;top:113px;width:108px;height:2px;background:#2f62ad"></div>
<span class="t" style="left:754.0px;top:125.3px;font-size:9.5px;line-height:13.3px;color:#d2d2d2;font-weight:400;transform:scaleX(1.021);">幅(W):</span>
<span class="t" style="left:792.0px;top:125.0px;font-size:10px;line-height:14.0px;color:#e2e2e2;font-weight:400;transform:scaleX(0.919);">2.000</span>
<div class="pm" style="left:834px;top:131.5px;width:8.5px;height:1.6px"></div><div class="pm" style="left:845px;top:131.5px;width:8.5px;height:1.6px"></div><div class="pm" style="left:848.3px;top:128px;width:1.6px;height:8.5px"></div>
<div class="fld" style="left:858px;top:121px;width:62px;height:22px"></div>
<span class="t" style="left:866.0px;top:125.0px;font-size:10px;line-height:14.0px;color:#dcdcdc;font-weight:400;transform:scaleX(0.960);">mm</span>
<svg style="left:904.5px;top:130.0px" width="7" height="5" viewBox="0 0 8 5"><path d="M1 0.8 L4 3.8 L7 0.8" fill="none" stroke="#e0e0e0" stroke-width="1.5"/></svg>
<span class="t" style="left:754.0px;top:150.8px;font-size:9.5px;line-height:13.3px;color:#d2d2d2;font-weight:400;transform:scaleX(0.970);">線種:</span>
<div class="fld" style="left:788px;top:147px;width:88px;height:21px"></div>
<div class="a" style="left:793px;top:156.5px;width:67px;height:1.6px;background:#f0f0f0"></div>
<svg style="left:862.5px;top:156.0px" width="7" height="5" viewBox="0 0 8 5"><path d="M1 0.8 L4 3.8 L7 0.8" fill="none" stroke="#e0e0e0" stroke-width="1.5"/></svg>
<div class="fld" style="left:881px;top:147px;width:48px;height:21px"></div>
<span class="t" style="left:886.0px;top:150.5px;font-size:10px;line-height:14.0px;color:#e2e2e2;font-weight:400;transform:scaleX(0.873);">0.00</span>
<div class="pmd" style="left:908px;top:157px;width:8px;height:1.2px"></div><div class="pm" style="left:920px;top:157px;width:8.5px;height:1.6px"></div><div class="pm" style="left:923.3px;top:153.5px;width:1.6px;height:8.5px"></div>
<span class="t" style="left:754.0px;top:180.3px;font-size:9.5px;line-height:13.3px;color:#d2d2d2;font-weight:400;transform:scaleX(0.738);">マーカー:</span>
<div class="fld" style="left:788px;top:172px;width:44px;height:28px"></div>
<div class="a" style="left:791px;top:186px;width:27px;height:1px;background:#bdbdbd"></div>
<svg style="left:819.5px;top:184.5px" width="7" height="5" viewBox="0 0 8 5"><path d="M1 0.8 L4 3.8 L7 0.8" fill="none" stroke="#e0e0e0" stroke-width="1.5"/></svg>
<div class="fld" style="left:836px;top:172px;width:44px;height:28px"></div>
<div class="a" style="left:839px;top:186px;width:27px;height:1px;background:#bdbdbd"></div>
<svg style="left:867.5px;top:184.5px" width="7" height="5" viewBox="0 0 8 5"><path d="M1 0.8 L4 3.8 L7 0.8" fill="none" stroke="#e0e0e0" stroke-width="1.5"/></svg>
<div class="fld" style="left:885px;top:172px;width:44px;height:28px"></div>
<div class="a" style="left:888px;top:186px;width:27px;height:1px;background:#bdbdbd"></div>
<svg style="left:916.5px;top:184.5px" width="7" height="5" viewBox="0 0 8 5"><path d="M1 0.8 L4 3.8 L7 0.8" fill="none" stroke="#e0e0e0" stroke-width="1.5"/></svg>
<span class="t" style="left:754.0px;top:208.8px;font-size:9.5px;line-height:13.3px;color:#d2d2d2;font-weight:400;transform:scaleX(0.824);">角:</span>
<div class="btn" style="left:788.0px;top:204.0px;width:23px;height:23px"></div><svg style="left:792.0px;top:208.0px" width="15" height="15" viewBox="0 0 15 15"><path d="M1 14 V7 A6 6 0 0 1 7 1 H14 V6 H9 Q6.5 6 6.5 8.5 V14Z" fill="#f2f2f2"/><path d="M9.5 8.5H13V11H9.5z" fill="#f2f2f2"/><path d="M3 4h8M3 6h3M3 8h3M3 10h3M3 12h3" stroke="#2f2f2f" stroke-width=".8" stroke-dasharray="1 1"/></svg>
<div class="btn" style="left:814.5px;top:204.0px;width:23px;height:23px"></div><svg style="left:818.5px;top:208.0px" width="15" height="15" viewBox="0 0 15 15"><path d="M1 14 V5 L5 1 H14 V6 H8 L6.5 7.5 V14Z" fill="#f2f2f2"/><path d="M9.5 8.5H13V11H9.5z" fill="#f2f2f2"/><path d="M3 4h8M3 6h3M3 8h3M3 10h3M3 12h3" stroke="#2f2f2f" stroke-width=".8" stroke-dasharray="1 1"/></svg>
<div class="btn sel" style="left:841.0px;top:204.0px;width:23px;height:23px"></div><svg style="left:845.0px;top:208.0px" width="15" height="15" viewBox="0 0 15 15"><path d="M1 14 V1 H14 V6 H6.5 V14Z" fill="#f2f2f2"/><path d="M8.5 8H13V10.5H8.5z" fill="#f2f2f2"/><path d="M2 3.5h11M2 8h4M2 10h4M2 12h4" stroke="#27467f" stroke-width=".8"/></svg>
<span class="t" style="left:872.0px;top:208.5px;font-size:10px;line-height:14.0px;color:#e2e2e2;font-weight:400;transform:scaleX(0.925);">4.00</span>
<div class="pm" style="left:907px;top:215px;width:8.5px;height:1.6px"></div><div class="pm" style="left:918px;top:215px;width:8.5px;height:1.6px"></div><div class="pm" style="left:921.3px;top:211.5px;width:1.6px;height:8.5px"></div>
<span class="t" style="left:754.0px;top:235.3px;font-size:9.5px;line-height:13.3px;color:#d2d2d2;font-weight:400;transform:scaleX(0.824);">端:</span>
<div class="btn sel" style="left:788.0px;top:231.0px;width:23px;height:23px"></div><svg style="left:792.0px;top:235.0px" width="15" height="15" viewBox="0 0 15 15"><path d="M3 3.5H6.5V13H3Z M8.5 3.5H12V13H8.5Z" fill="#f2f2f2"/><path d="M7.5 3.5V13" stroke="#c8d4ea" stroke-width="1"/></svg>
<div class="btn" style="left:814.5px;top:231.0px;width:23px;height:23px"></div><svg style="left:818.5px;top:235.0px" width="15" height="15" viewBox="0 0 15 15"><path d="M2.5 13 V7 A5 5 0 0 1 12.5 7 V13 H9.5 V7 A2 2 0 0 0 5.5 7 V13Z" fill="#f2f2f2"/><path d="M7.5 6V13" stroke="#f2f2f2" stroke-width="1.4"/></svg>
<div class="btn" style="left:841.0px;top:231.0px;width:23px;height:23px"></div><svg style="left:845.0px;top:235.0px" width="15" height="15" viewBox="0 0 15 15"><path d="M2.5 13 V2.5 H12.5 V13 H9.8 V5.5 H5.2 V13Z" fill="#f2f2f2"/><path d="M7.5 5V13" stroke="#f2f2f2" stroke-width="1.4"/></svg>
<span class="t" style="left:754.0px;top:261.9px;font-size:9.5px;line-height:13.3px;color:#d2d2d2;font-weight:400;transform:scaleX(1.017);">順番:</span>
<div class="btn sel" style="left:788.0px;top:257.0px;width:23px;height:23px"></div><svg style="left:790.5px;top:259.5px" width="18" height="18" viewBox="0 0 19 19"><path d="M4.5 7.5H17V10.5H8V17.5H4.5Z" fill="#f4f4f4"/><circle cx="6.5" cy="6.3" r="5.9" fill="#29a5e6"/><rect x="9" y="10.5" width="8.5" height="7.5" fill="#e4008a"/></svg>
<div class="btn" style="left:788.0px;top:284.0px;width:23px;height:23px"></div><svg style="left:790.5px;top:286.5px" width="18" height="18" viewBox="0 0 19 19"><circle cx="6.5" cy="6.3" r="5.9" fill="#29a5e6"/><path d="M4.5 7.5H17V10.5H8V17.5H4.5Z" fill="#f4f4f4"/><rect x="9" y="10.5" width="8.5" height="7.5" fill="#e4008a"/></svg>
<div class="btn" style="left:814.5px;top:257.0px;width:23px;height:23px"></div><svg style="left:817.0px;top:259.5px" width="18" height="18" viewBox="0 0 19 19"><path d="M4.5 7.5H17V10.5H8V17.5H4.5Z" fill="#f4f4f4"/><circle cx="6.5" cy="6.3" r="5.9" fill="#29a5e6"/><rect x="7.5" y="9" width="10" height="9" fill="#e4008a"/></svg>
<div class="btn" style="left:814.5px;top:284.0px;width:23px;height:23px"></div><svg style="left:817.0px;top:286.5px" width="18" height="18" viewBox="0 0 19 19"><path d="M4.5 7.5H17V10.5H8V17.5H4.5Z" fill="#f4f4f4"/><circle cx="6.5" cy="6.3" r="5.9" fill="#29a5e6"/><rect x="7.5" y="9" width="10" height="9" fill="#e4008a"/></svg>
<div class="btn" style="left:841.0px;top:257.0px;width:23px;height:23px"></div><svg style="left:843.5px;top:259.5px" width="18" height="18" viewBox="0 0 19 19"><circle cx="6.5" cy="6.3" r="5.9" fill="#29a5e6"/><path d="M4.5 7.5H17V10.5H8V17.5H4.5Z" fill="#f4f4f4"/><rect x="9" y="10.5" width="8.5" height="7.5" fill="#e4008a"/></svg>
<div class="btn" style="left:841.0px;top:284.0px;width:23px;height:23px"></div><svg style="left:843.5px;top:286.5px" width="18" height="18" viewBox="0 0 19 19"><circle cx="6.5" cy="6.3" r="5.9" fill="#29a5e6"/><path d="M4.5 7.5H17V10.5H8V17.5H4.5Z" fill="#f4f4f4"/><rect x="8.5" y="8.5" width="9" height="9.5" fill="#e4008a"/></svg>
<svg style="left:0;top:0" width="1280" height="720" viewBox="0 0 1280 720"><path d="M977.5 442 C986 440 988 447 996 446 C1006 445 1014 441 1019 437 C1021 434 1019 432 1017 433 C1015 435 1017 438 1021 437 C1034 433 1044 431 1054 427 C1062 424 1066 418 1068.3 410" fill="none" stroke="#e4e4e4" stroke-width="1.1"/><text transform="translate(980.5 436.5) rotate(-11.5)" font-family="'Liberation Sans','Noto Sans CJK JP',sans-serif" font-weight="400" font-size="15.5" fill="#eaeaea" textLength="74" lengthAdjust="spacingAndGlyphs">初期費用</text></svg>
<span class="t" style="left:1017.0px;top:436.4px;font-size:28px;line-height:39.2px;color:#f4f4f4;font-weight:500;transform:scaleX(1.035);">ゼロ</span>
<span class="t" style="left:1081.0px;top:447.4px;font-size:16.5px;line-height:23.1px;color:#eaeaea;font-weight:400;transform:scaleX(1.061);">から</span>
<span class="t" style="left:1031.0px;top:469.1px;font-size:17px;line-height:23.8px;color:#eaeaea;font-weight:400;transform:scaleX(1.103);">はじめて</span>
<span class="t" style="left:1108.0px;top:467.7px;font-size:19px;line-height:26.6px;color:#f4f4f4;font-weight:700;transform:scaleX(1.015);">クリエイター</span>
<span class="t" style="left:1043.0px;top:495.6px;font-size:10.5px;line-height:14.7px;color:#e6e6e6;font-weight:400;transform:scaleX(1.090);">zero kara hajimete creator</span>
<div class="a" style="left:745px;top:533px;width:500px;height:74px;background:#313131"></div>
<div class="a" style="left:745px;top:533px;width:500px;height:1px;background:#2a2a2a"></div>
<span class="t" style="left:1105.0px;top:540.9px;font-size:9.5px;line-height:13.3px;color:#d2d2d2;font-weight:400;transform:scaleX(0.767);">ブレンドモード:</span>
<div class="fld" style="left:1163px;top:536px;width:81px;height:22px"></div>
<span class="t" style="left:1170.0px;top:540.9px;font-size:9.5px;line-height:13.3px;color:#dcdcdc;font-weight:400;transform:scaleX(0.947);">標準</span>
<svg style="left:1228.5px;top:546.0px" width="7" height="5" viewBox="0 0 8 5"><path d="M1 0.8 L4 3.8 L7 0.8" fill="none" stroke="#e0e0e0" stroke-width="1.5"/></svg>
<div class="a" style="left:749px;top:561px;width:441px;height:19px;background:#252525"></div>
<div class="a" style="left:1190px;top:561px;width:54px;height:19px;background:#2c2c2c"></div>
<span class="t" style="left:752.0px;top:563.4px;font-size:9.5px;line-height:13.3px;color:#e6e6e6;font-weight:400;transform:scaleX(0.849);">ぼかし (%)</span>
<span class="t" style="left:1197.0px;top:563.0px;font-size:10px;line-height:14.0px;color:#e2e2e2;font-weight:400;transform:scaleX(0.863);">0.0</span>
<div class="pmd" style="left:1222px;top:569.5px;width:7px;height:1.2px"></div><div class="pm" style="left:1233px;top:569.5px;width:8.5px;height:1.6px"></div><div class="pm" style="left:1236.3px;top:566px;width:1.6px;height:8.5px"></div>
<div class="a" style="left:749px;top:581px;width:441px;height:18px;background:#1f5bab"></div>
<div class="a" style="left:1190px;top:581px;width:54px;height:18px;background:#2c2c2c"></div>
<span class="t" style="left:752.0px;top:583.4px;font-size:9.5px;line-height:13.3px;color:#ffffff;font-weight:400;transform:scaleX(1.010);">不透明度 (%)</span>
<span class="t" style="left:1197.0px;top:583.0px;font-size:10px;line-height:14.0px;color:#e2e2e2;font-weight:400;transform:scaleX(0.919);">100.0</span>
<div class="pm" style="left:1222px;top:589.5px;width:8.5px;height:1.6px"></div><div class="pmd" style="left:1234px;top:589.5px;width:7px;height:1.2px"></div><div class="pmd" style="left:1237px;top:586.5px;width:1.2px;height:7px"></div>
<div class="a" style="left:1245px;top:68px;width:35px;height:540px;background:#353535"></div>
<svg style="left:1257.8px;top:75.8px" width="12.5" height="12.5" viewBox="0 0 14 14"><path d="M3 1.5H8.5L11 4V12.5H3Z" fill="none" stroke="#ececec" stroke-width="1.8" stroke-linejoin="round"/><circle cx="11.5" cy="2.5" r="1.3" fill="#3aa04a"/></svg>
<svg style="left:1257.8px;top:99.8px" width="12.5" height="12.5" viewBox="0 0 14 14"><path d="M1.5 12V3H5.5L7 4.5H11.5V6H4.5L2.5 12Z M3.5 12.5 L5.3 7H13.5L11.5 12.5Z" fill="#ececec"/></svg>
<svg style="left:1257.8px;top:123.8px" width="12.5" height="12.5" viewBox="0 0 14 14"><path d="M1.5 12.5H12.5V9L10.5 7H3.5L1.5 9Z" fill="#ececec"/><path d="M7 1V6M5 4L7 6.2 9 4" stroke="#3aa04a" stroke-width="1.4" fill="none"/></svg>
<svg style="left:1257.8px;top:147.8px" width="12.5" height="12.5" viewBox="0 0 14 14"><path d="M1.5 5.5H12.5V10.5H10.5V8.5H3.5V10.5H1.5Z M3.5 2H10.5V4.5H3.5Z M4.5 9.5H9.5V12.5H4.5Z" fill="#ececec"/></svg>
<svg style="left:1257.8px;top:175.2px" width="12.5" height="12.5" viewBox="0 0 14 14"><path d="M4 1.5H9L11.5 4V12.5H4Z" fill="none" stroke="#ececec" stroke-width="1.8" stroke-linejoin="round"/><path d="M1 8H7M5 6L7.2 8 5 10" stroke="#3aa04a" stroke-width="1.4" fill="none"/></svg>
<svg style="left:1257.8px;top:201.2px" width="12.5" height="12.5" viewBox="0 0 14 14"><path d="M2.5 1.5H7.5L10 4V12.5H2.5Z" fill="none" stroke="#ececec" stroke-width="1.8" stroke-linejoin="round"/><path d="M7 8.5H13M11 6.5L13.2 8.5 11 10.5" stroke="#3aa04a" stroke-width="1.4" fill="none"/></svg>
<svg style="left:1257.8px;top:227.8px" width="12.5" height="12.5" viewBox="0 0 14 14"><path d="M11.5 11 V8 a2.5 2.5 0 0 0 -2.5 -2.5 H3.5" fill="none" stroke="#ececec" stroke-width="1.7"/><path d="M5.5 2.5 L2 5.5 L5.5 8.5" fill="none" stroke="#ececec" stroke-width="1.7"/></svg>
<svg style="left:1257.8px;top:253.8px" width="12.5" height="12.5" viewBox="0 0 14 14"><path d="M2.5 11 V8 a2.5 2.5 0 0 1 2.5 -2.5 H10.5" fill="none" stroke="#6c6c6c" stroke-width="1.7"/><path d="M8.5 2.5 L12 5.5 L8.5 8.5" fill="none" stroke="#6c6c6c" stroke-width="1.7"/></svg>
<svg style="left:1257.8px;top:279.8px" width="12.5" height="12.5" viewBox="0 0 14 14"><rect x="1.5" y="1.5" width="7.5" height="8" fill="#ececec"/><rect x="5.5" y="5" width="7.5" height="8" fill="#ececec" stroke="#353535" stroke-width="1"/></svg>
<svg style="left:1257.8px;top:304.8px" width="12.5" height="12.5" viewBox="0 0 14 14"><circle cx="3.5" cy="11" r="2" fill="none" stroke="#ececec" stroke-width="1.4"/><circle cx="10.5" cy="11" r="2" fill="none" stroke="#ececec" stroke-width="1.4"/><path d="M4.5 9.5 L10 1.5 M9.5 9.5 L4 1.5" stroke="#ececec" stroke-width="1.6"/></svg>
<svg style="left:1257.8px;top:330.2px" width="12.5" height="12.5" viewBox="0 0 14 14"><path d="M2.5 2.5H11.5V12.5H2.5Z" fill="#ececec"/><path d="M5 1.5H9V4H5Z" fill="#ececec" stroke="#353535" stroke-width=".8"/><path d="M4.5 6.5H9.5V10.5H4.5Z" fill="#8a8a8a"/></svg>
<svg style="left:1257.8px;top:356.8px" width="12.5" height="12.5" viewBox="0 0 14 14"><circle cx="6.2" cy="6.2" r="5" fill="#ececec"/><path d="M10 10L13 13" stroke="#ececec" stroke-width="2" stroke-linecap="round"/><rect x="4" y="4" width="4" height="4" fill="none" stroke="#353535" stroke-width="1" stroke-dasharray="1 1"/></svg>
<svg style="left:1257.8px;top:381.8px" width="12.5" height="12.5" viewBox="0 0 14 14"><circle cx="6.2" cy="6.2" r="5" fill="#ececec"/><path d="M10 10L13 13" stroke="#ececec" stroke-width="2" stroke-linecap="round"/><path d="M3.5 7L7 3.5 8.5 5 5 8.5Z" fill="#353535"/></svg>
<svg style="left:1257.8px;top:406.2px" width="12.5" height="12.5" viewBox="0 0 14 14"><circle cx="6.2" cy="6.2" r="5" fill="#ececec"/><path d="M10 10L13 13" stroke="#ececec" stroke-width="2" stroke-linecap="round"/><rect x="4.3" y="3" width="3.4" height="6" fill="#353535"/></svg>
<svg style="left:1257.8px;top:430.8px" width="12.5" height="12.5" viewBox="0 0 14 14"><rect x="3" y="3" width="8" height="8" fill="none" stroke="#ececec" stroke-width="1.5"/><path d="M1 3H2M1 11H2M12 3H13M12 11H13M3 1V2M11 1V2M3 12V13M11 12V13" stroke="#ececec" stroke-width="1.2"/><rect x="5.5" y="5.5" width="3" height="3" fill="#ececec"/></svg>
<svg style="left:1257.8px;top:457.8px" width="12.5" height="12.5" viewBox="0 0 14 14"><rect x="1.5" y="1.5" width="7.5" height="7.5" fill="#ececec"/><rect x="5.5" y="5.5" width="7.5" height="7.5" fill="#22b022" stroke="#353535" stroke-width="1"/></svg>
<svg style="left:1257.8px;top:482.8px" width="12.5" height="12.5" viewBox="0 0 14 14"><rect x="1.5" y="1.5" width="7.5" height="7.5" fill="#ececec"/><rect x="5.5" y="5.5" width="7.5" height="7.5" fill="#ececec" stroke="#353535" stroke-width="1"/><path d="M7.5 8V11H10.5" stroke="#353535" stroke-width="1" fill="none"/></svg>
<svg style="left:1257.8px;top:507.8px" width="12.5" height="12.5" viewBox="0 0 14 14"><rect x="1.5" y="1.5" width="7.5" height="7.5" fill="none" stroke="#ececec" stroke-width="1.5"/><rect x="5.5" y="5.5" width="7.5" height="7.5" fill="#ececec" stroke="#353535" stroke-width="1"/><rect x="8" y="8" width="3" height="3" fill="#353535"/></svg>
<svg style="left:1257.8px;top:534.8px" width="12.5" height="12.5" viewBox="0 0 14 14"><rect x="3.5" y="3.5" width="6" height="6" fill="#ececec"/><path d="M1.5 4V1.5H4M10 1.5H12.5V4M12.5 10V12.5H10M4 12.5H1.5V10" fill="none" stroke="#3aa04a" stroke-width="1.3"/><path d="M8 8L12 12" stroke="#ececec" stroke-width="1.3"/></svg>
<svg style="left:1257.8px;top:559.8px" width="12.5" height="12.5" viewBox="0 0 14 14"><circle cx="7" cy="7" r="2.6" fill="#ececec"/><path d="M2 2L4.5 4.5M12 2L9.5 4.5M2 12L4.5 9.5M12 12L9.5 9.5" stroke="#ececec" stroke-width="1.4"/><path d="M1 7H3M11 7H13M7 1V3M7 11V13" stroke="#9a9a9a" stroke-width="1"/></svg>
<div class="btn" style="left:1252px;top:579px;width:24px;height:23px"></div>
<svg style="left:1260.0px;top:589.0px" width="8" height="5" viewBox="0 0 8 5"><path d="M1 0.8 L4 3.8 L7 0.8" fill="none" stroke="#e6e6e6" stroke-width="1.5"/></svg>
<div class="a" style="left:0;top:607px;width:1280px;height:44px;background:#353535"></div>
<div class="a" style="left:1px;top:607.5px;width:43px;height:43.5px;background:#fff"></div>
<svg style="left:1px;top:608px" width="43" height="43" viewBox="0 0 43 43"><path d="M3.5 3.5L39.5 39.5M39.5 3.5L3.5 39.5" stroke="#a8123c" stroke-width="3.4" stroke-linecap="round"/></svg>
<div class="a" style="left:44.5px;top:608px;width:43.5px;height:43px;background:#000"></div>
<div class="a" style="left:88.5px;top:608px;width:43.5px;height:43px;background:#000"></div>
<div class="a" style="left:133px;top:629px;width:21px;height:22px;background:#1e6cf5"></div>
<div class="a" style="left:155px;top:629px;width:21px;height:22px;background:#21abb6"></div>
<div class="a" style="left:177px;top:629px;width:21px;height:22px;background:#26006c"></div>
<div class="a" style="left:199px;top:629px;width:21px;height:22px;background:#cf5d45"></div>
<div class="a" style="left:221px;top:629px;width:21px;height:22px;background:#d8214d"></div>
<div class="a" style="left:243px;top:629px;width:21px;height:22px;background:#eaf4fd"></div>
<div class="a" style="left:181px;top:633px;width:13px;height:13px;border:1.6px solid #c8b8f0;border-radius:50%"></div>
<div class="a" style="left:228px;top:636px;width:7px;height:7px;background:#f6c6d2;border-radius:50%"></div>
<svg style="transform:rotate(180deg);left:1253.5px;top:616.0px" width="9" height="5" viewBox="0 0 8 5"><path d="M1 0.8 L4 3.8 L7 0.8" fill="none" stroke="#8a8a8a" stroke-width="1.5"/></svg>
<svg style="left:1253.5px;top:636.0px" width="9" height="5" viewBox="0 0 8 5"><path d="M1 0.8 L4 3.8 L7 0.8" fill="none" stroke="#8a8a8a" stroke-width="1.5"/></svg>
<div class="a" style="left:1268px;top:639px;width:9px;height:1.6px;background:#f0f0f0;box-shadow:0 3.2px 0 #f0f0f0,0 6.4px 0 #f0f0f0"></div>
<div class="a" style="left:0;top:651px;width:1280px;height:29px;background:#353535"></div>
<span class="t" style="left:14.0px;top:654.2px;font-size:9px;line-height:12.6px;color:#d0d0d0;font-weight:400;transform:scaleX(0.750);">フィル:</span>
<span class="t" style="left:0.0px;top:668.2px;font-size:9px;line-height:12.6px;color:#d0d0d0;font-weight:400;transform:scaleX(0.758);">ストローク:</span>
<div class="a" style="left:51px;top:652px;width:33px;height:14px;background:#d8214d"></div>
<div class="a" style="left:51px;top:666px;width:33px;height:13px;background:#26006c"></div>
<span class="t" style="left:92.0px;top:668.1px;font-size:9.5px;line-height:13.3px;color:#d6d6d6;font-weight:400;transform:scaleX(0.973);">2.00</span>
<span class="t" style="left:117.0px;top:660.4px;font-size:9.5px;line-height:13.3px;color:#d0d0d0;font-weight:400;transform:scaleX(0.897);">O:</span>
<div class="fld" style="left:130px;top:655px;width:47px;height:24px"></div>
<span class="t" style="left:136.0px;top:660.0px;font-size:10px;line-height:14.0px;color:#e2e2e2;font-weight:400;transform:scaleX(0.899);">100</span>
<div class="pm" style="left:156px;top:666.5px;width:8.5px;height:1.6px"></div><div class="pmd" style="left:167px;top:666.5px;width:7px;height:1.2px"></div><div class="pmd" style="left:170px;top:663.5px;width:1.2px;height:7px"></div>
<div class="a" style="left:185px;top:659px;width:2px;height:15px;background:#3b78d8"></div>
<span class="t" style="left:191.0px;top:660.0px;font-size:10px;line-height:14.0px;color:#d8d8d8;font-weight:400;transform:scaleX(0.929);">Layer 1</span>
<svg style="left:235px;top:662px" width="12" height="10" viewBox="0 0 12 10"><path d="M1 5.5 C3 2.5 9 2.5 11 5.5 C9 8.5 3 8.5 1 5.5Z" fill="none" stroke="#ececec" stroke-width="1.3"/><circle cx="6" cy="5.5" r="1.8" fill="#ececec"/><path d="M3 1.5l.8 1.5M6 .6V2.4M9 1.5l-.8 1.5" stroke="#ececec" stroke-width="1"/></svg>
<svg style="left:260px;top:661px" width="10" height="11" viewBox="0 0 10 11"><rect x="0.5" y="5" width="7.5" height="5.5" rx="0.8" fill="#ececec"/><path d="M5.5 5V3a2 2 0 0 1 4 0V4" fill="none" stroke="#ececec" stroke-width="1.3"/></svg>
<span class="t" style="left:283.0px;top:660.4px;font-size:9.5px;line-height:13.3px;color:#d8d8d8;font-weight:400;transform:scaleX(0.951);"><b>移動</b> -81.91 mm, 6.24 mm。<b>Ctrl</b> で水平/垂直方向に制限、<b>Shift</b> でスナップを無効化します</span>
<span class="t" style="left:1064.0px;top:654.1px;font-size:9.5px;line-height:13.3px;color:#d0d0d0;font-weight:400;transform:scaleX(0.890);">X:</span>
<span class="t" style="left:1082.0px;top:654.1px;font-size:9.5px;line-height:13.3px;color:#d8d8d8;font-weight:400;transform:scaleX(1.023);">112.80</span>
<span class="t" style="left:1064.0px;top:668.1px;font-size:9.5px;line-height:13.3px;color:#d0d0d0;font-weight:400;transform:scaleX(0.946);">Y:</span>
<span class="t" style="left:1082.0px;top:668.1px;font-size:9.5px;line-height:13.3px;color:#d8d8d8;font-weight:400;transform:scaleX(0.998);">191.59</span>
<span class="t" style="left:1118.0px;top:660.4px;font-size:9.5px;line-height:13.3px;color:#d0d0d0;font-weight:400;transform:scaleX(1.065);">Z:</span>
<div class="fld" style="left:1130px;top:655px;width:61px;height:24px"></div>
<span class="t" style="left:1140.0px;top:660.0px;font-size:10px;line-height:14.0px;color:#e2e2e2;font-weight:400;transform:scaleX(0.899);">93%</span>
<div class="pm" style="left:1168px;top:666.5px;width:8.5px;height:1.6px"></div><div class="pm" style="left:1180px;top:666.5px;width:8.5px;height:1.6px"></div><div class="pm" style="left:1183.3px;top:663px;width:1.6px;height:8.5px"></div>
<span class="t" style="left:1197.0px;top:660.4px;font-size:9.5px;line-height:13.3px;color:#d0d0d0;font-weight:400;transform:scaleX(0.842);">R:</span>
<div class="fld" style="left:1208px;top:655px;width:68px;height:24px"></div>
<span class="t" style="left:1221.0px;top:660.0px;font-size:10px;line-height:14.0px;color:#e2e2e2;font-weight:400;transform:scaleX(0.937);">0.00°</span>
<div class="pm" style="left:1251px;top:666.5px;width:8.5px;height:1.6px"></div><div class="pm" style="left:1263px;top:666.5px;width:8.5px;height:1.6px"></div><div class="pm" style="left:1266.3px;top:663px;width:1.6px;height:8.5px"></div>
<div class="a" style="left:0;top:680px;width:1280px;height:40px;background:#000"></div>
<div class="a" style="left:0;top:680px;width:1280px;height:1px;background:#a8aa80"></div>
</body></html>
